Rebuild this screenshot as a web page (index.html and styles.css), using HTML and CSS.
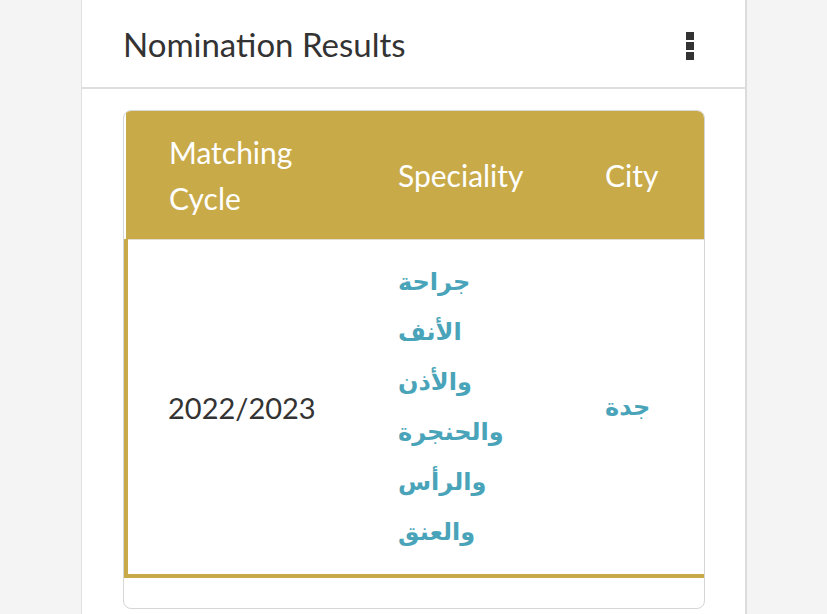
FILE: index.html
```html
<!DOCTYPE html>
<html lang="en">
<head>
    <meta charset="UTF-8">
    <meta name="viewport" content="width=device-width, initial-scale=1.0">
    <title>Nomination Results</title>
    <link rel="stylesheet" href="styles.css">
</head>
<body>

<div class="card">
    <!-- Card Header -->
    <div class="card-header">
        <h2 class="card-title">Nomination Results</h2>
        <span class="kebab">
            <span></span><span></span><span></span>
        </span>
    </div>

    <!-- Results Table -->
    <div class="card-body">
        <div class="table-wrap">
            <table class="results">
                <thead>
                    <tr>
                        <th class="col-cycle">Matching Cycle</th>
                        <th class="col-spec">Speciality</th>
                        <th class="col-city">City</th>
                    </tr>
                </thead>
                <tbody>
                    <tr>
                        <td>2022/2023</td>
                        <td class="ar"><span class="ar-text">جراحة الأنف والأذن والحنجرة والرأس والعنق</span></td>
                        <td class="ar">جدة</td>
                    </tr>
                </tbody>
            </table>
        </div>
    </div>
</div>

</body>
</html>
```

FILE: styles.css
```css
body {
    margin: 0;
    background-color: #f4f4f4;
    font-family: Lato, "Open Sans", sans-serif;
    color: #333;
}

.card {
    margin-left: 81px;
    width: 663px;
    min-height: 614px;
    background-color: #fff;
    border-left: 1px solid #e0e0e0;
    border-right: 2px solid #dcdcdc;
}

.card-header {
    display: flex;
    align-items: center;
    justify-content: space-between;
    height: 87px;
    padding: 0 51px 0 41px;
    border-bottom: 2px solid #dedede;
}

.card-title {
    margin: 0;
    font-size: 33px;
    font-weight: 400;
    color: #333;
}

.kebab {
    display: flex;
    flex-direction: column;
    gap: 2px;
    margin-top: 4px;
}

.kebab span {
    width: 8px;
    height: 8px;
    background-color: #333;
}

.card-body {
    padding: 21px 41px 0 41px;
}

.table-wrap {
    width: 580px;
    border: 1px solid #d6d6d6;
    border-radius: 8px;
    overflow: hidden;
    padding-bottom: 30px;
}

.results {
    border-collapse: collapse;
    table-layout: fixed;
    width: 640px;
    font-size: 30px;
}

.results th {
    background-color: #c8aa49;
    color: #fff;
    font-weight: 400;
    text-align: left;
    line-height: 46px;
    padding: 18px 22px;
}

.results th.col-cycle {
    width: 185px;
    padding-left: 43px;
}

.results th.col-spec {
    width: 163px;
}

.results td {
    border-top: 1px solid #e2ddd0;
    padding: 17px 22px;
    vertical-align: middle;
    text-align: left;
    font-size: 29px;
}

.results td:first-child {
    padding-left: 40px;
    border-left: 4px solid #c8aa49;
}

.results tbody tr {
    border-bottom: 4px solid #c8aa49;
}

.results td.ar {
    font-family: "DejaVu Sans", sans-serif;
    font-weight: 700;
    font-size: 24px;
    color: #4aa4b9;
}

.ar-text {
    display: block;
    width: 122px;
    line-height: 50px;
}
```
